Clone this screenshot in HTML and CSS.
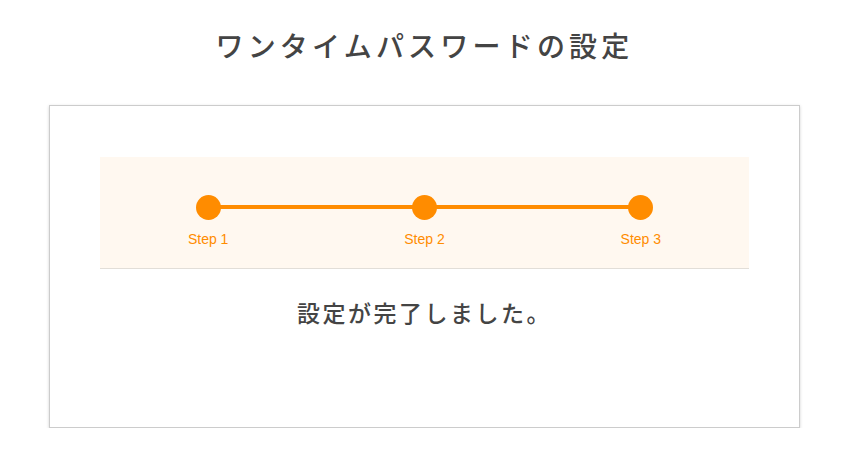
FILE: index.html
```html
<!DOCTYPE html>
<html lang="ja">
<head>
    <meta charset="UTF-8">
    <meta name="viewport" content="width=device-width, initial-scale=1.0">
    <title>ワンタイムパスワードの設定</title>
    <link rel="stylesheet" href="styles.css">
</head>
<body>

    <h1 class="page-title">ワンタイムパスワードの設定</h1>

    <div class="card">
        <div class="steps">
            <div class="step">
                <span class="dot"></span>
                <span class="label">Step 1</span>
            </div>
            <div class="step">
                <span class="dot"></span>
                <span class="label">Step 2</span>
            </div>
            <div class="step">
                <span class="dot"></span>
                <span class="label">Step 3</span>
            </div>
        </div>

        <p class="message">設定が完了しました。</p>
    </div>

</body>
</html>
```

FILE: styles.css
```css
* {
    box-sizing: border-box;
    margin: 0;
    padding: 0;
}

body {
    background: #fff;
    color: #444;
    font-family: "Noto Sans CJK JP", "Noto Sans", sans-serif;
    padding: 24px 50px 0 49px;
}

.page-title {
    font-size: 28px;
    font-weight: 500;
    letter-spacing: 4.2px;
    text-align: center;
    line-height: 42px;
    margin-bottom: 39px;
}

.card {
    height: 323px;
    border: 1px solid #ccc;
    box-shadow: 0 1px 3px rgba(0, 0, 0, 0.18);
    padding: 51px 50px 0 50px;
}

.steps {
    display: grid;
    grid-template-columns: repeat(3, 1fr);
    background: #fff8f0;
    border-bottom: 1px solid #e2ded8;
    padding: 38px 0 19px;
}

.step {
    position: relative;
    display: flex;
    flex-direction: column;
    align-items: center;
}

/* connecting line to the next step */
.step:not(:last-child)::after {
    content: "";
    position: absolute;
    top: 10px;
    left: 50%;
    width: 100%;
    height: 4px;
    background: #ff8c00;
}

.dot {
    position: relative;
    z-index: 1;
    width: 25px;
    height: 25px;
    border-radius: 50%;
    background: #ff8c00;
}

.label {
    margin-top: 10px;
    font-family: "Liberation Sans", sans-serif;
    font-size: 14px;
    color: #ff8c00;
    line-height: 19px;
}

.message {
    text-align: center;
    font-size: 23px;
    font-weight: 500;
    letter-spacing: 2.5px;
    margin-top: 27px;
    line-height: 32px;
}
```
